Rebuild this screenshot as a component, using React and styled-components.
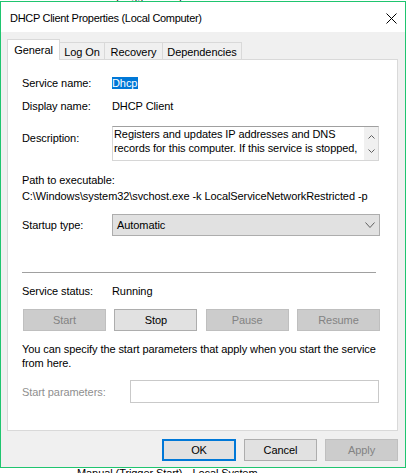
import React from "react";
import styled, { createGlobalStyle } from "styled-components";

const ui = `"Liberation Sans", Arial, sans-serif`;

const Global = createGlobalStyle`
  html, body { margin: 0; padding: 0; background: #fff; }
  body { font-family: ${ui}; font-size: 11px; color: #000; letter-spacing: -0.08px; }
  * { box-sizing: border-box; }
`;

const Desktop = styled.div`
  position: relative;
  width: 408px;
  height: 473px;
  overflow: hidden;
  background: #fff;
`;

const ServiceList = styled.div`
  display: flex;
  flex-direction: column;
`;

const ServiceRow = styled.div`
  display: flex;
  gap: 10px;
  padding-left: 77px;
  height: 14px;
  line-height: 14px;
  margin-top: ${p => p.$top}px;
  white-space: nowrap;
`;

const Window = styled.div`
  position: absolute;
  top: 1px;
  left: 0;
  width: 406px;
  height: 467px;
  border: 1px solid #1fc56f;
  background: #f0f0f0;
  display: flex;
  flex-direction: column;
`;

const TitleBar = styled.div`
  height: 30px;
  background: #fff;
  display: flex;
  align-items: center;
  justify-content: space-between;
  padding: 2px 8px 0 9px;
  font-size: 11px;
  letter-spacing: -0.3px;
`;

const Body = styled.div`
  flex: 1;
  display: flex;
  flex-direction: column;
  padding: 7px 7px 0 6px;
`;

const TabStrip = styled.div`
  display: flex;
  align-items: flex-end;
  height: 20px;
`;

const Tab = styled.div`
  width: ${p => p.$w}px;
  height: ${p => (p.$active ? 21 : 17)}px;
  background: ${p => (p.$active ? "#fff" : "#f0f0f0")};
  border: 1px solid #d9d9d9;
  border-bottom: none;
  border-left: ${p => (p.$active ? "1px solid #d9d9d9" : "none")};
  margin-bottom: ${p => (p.$active ? -1 : 0)}px;
  position: relative;
  z-index: ${p => (p.$active ? 1 : 0)};
  display: flex;
  align-items: center;
  justify-content: center;
  padding-top: ${p => (p.$active ? 0 : 1)}px;
`;

const Panel = styled.div`
  width: 391px;
  height: 372px;
  background: #fff;
  border: 1px solid #d9d9d9;
  padding: 16px 17px 0 14px;
  display: flex;
  flex-direction: column;
`;

const FieldRow = styled.div`
  display: grid;
  grid-template-columns: ${p => p.$label || 90}px 1fr;
  align-items: ${p => (p.$top ? "start" : "center")};
  margin-top: ${p => p.$gap || 0}px;
  line-height: 14px;
`;

const Label = styled.div`
  color: ${p => (p.$disabled ? "#8f8f8f" : "#000")};
  margin-top: ${p => p.$offset || 0}px;
`;

const Selected = styled.span`
  display: inline-block;
  background: #0078d7;
  color: #fff;
  line-height: 12px;
  padding-right: 1px;
`;

const DescBox = styled.div`
  width: 267px;
  height: 35px;
  display: flex;
  border: 1px solid #d6d6d6;
  border-top-color: #a0a0a0;
  background: #fff;
`;

const DescText = styled.div`
  flex: 1;
  padding: 0 2px 0 1px;
  line-height: 14px;
  height: 28px;
  overflow: hidden;
`;

const ScrollBar = styled.div`
  width: 14px;
  background: #f0f0f0;
  display: flex;
  flex-direction: column;
  align-items: center;
  justify-content: space-between;
  padding: 8px 0 7px;
`;

const Block = styled.div`
  margin-top: ${p => p.$gap || 0}px;
  line-height: 14px;
  white-space: ${p => (p.$nowrap ? "nowrap" : "normal")};
  margin-right: ${p => p.$bleed || 0}px;
`;

const Select = styled.div`
  width: 268px;
  height: 22px;
  background: #e1e1e1;
  border: 1px solid #adadad;
  display: flex;
  align-items: center;
  justify-content: space-between;
  padding: 0 4px 0 4px;
`;

const Separator = styled.div`
  width: 354px;
  height: 1px;
  background: #a0a0a0;
  margin-top: 36px;
`;

const ButtonRow = styled.div`
  display: flex;
  justify-content: space-between;
  margin: 11px 0 0 1px;
`;

const Button = styled.div`
  width: ${p => p.$w || 83}px;
  height: 22px;
  display: flex;
  align-items: center;
  justify-content: center;
  background: ${p => (p.$disabled ? "#cccccc" : "#e1e1e1")};
  border: ${p => (p.$default ? "2px solid #0078d7" : p.$disabled ? "1px solid #bfbfbf" : "1px solid #adadad")};
  color: ${p => (p.$disabled ? "#838383" : "#000")};
  font-size: 11px;
`;

const Input = styled.div`
  width: 249px;
  height: 23px;
  border: 1px solid #c9c9c9;
  background: #fff;
`;

const Footer = styled.div`
  display: flex;
  justify-content: flex-end;
  gap: 8px;
  padding-top: 8px;
`;

const Chevron = ({ up, w = 7, h = 4 }) => (
  <svg width={w} height={h} viewBox={`0 0 ${w} ${h}`}>
    <polyline
      points={up ? `0.5,${h - 0.5} ${w / 2},0.5 ${w - 0.5},${h - 0.5}` : `0.5,0.5 ${w / 2},${h - 0.5} ${w - 0.5},0.5`}
      fill="none"
      stroke="#606060"
      strokeWidth="1"
    />
  </svg>
);

const CloseIcon = () => (
  <svg width="11" height="11" viewBox="0 0 11 11">
    <path d="M0.5 0.5 L10.5 10.5 M10.5 0.5 L0.5 10.5" stroke="#000" strokeWidth="1" fill="none" />
  </svg>
);

const tabs = [
  { name: "General", w: 53, active: true },
  { name: "Log On", w: 45 },
  { name: "Recovery", w: 58 },
  { name: "Dependencies", w: 79 },
];

export default function App() {
  return (
    <Desktop>
      <Global />
      <ServiceList>
        <ServiceRow $top={-11}>
          <span>Manual (Trigger Start)</span>
          <span>Local Service</span>
        </ServiceRow>
        <ServiceRow $top={463}>
          <span>Manual (Trigger Start)</span>
          <span>Local System</span>
        </ServiceRow>
      </ServiceList>

      <Window>
        <TitleBar>
          <span>DHCP Client Properties (Local Computer)</span>
          <CloseIcon />
        </TitleBar>
        <Body>
          <TabStrip>
            {tabs.map(t => (
              <Tab key={t.name} $w={t.w} $active={t.active}>
                {t.name}
              </Tab>
            ))}
          </TabStrip>
          <Panel>
            <FieldRow>
              <Label>Service name:</Label>
              <div>
                <Selected>Dhcp</Selected>
              </div>
            </FieldRow>
            <FieldRow $gap={9}>
              <Label>Display name:</Label>
              <div>DHCP Client</div>
            </FieldRow>
            <FieldRow $gap={13} $top>
              <Label $offset={5}>Description:</Label>
              <DescBox>
                <DescText>
                  Registers and updates IP addresses and DNS records for this computer. If this
                  service is stopped, this computer will not receive dynamic IP addresses and DNS
                  updates.
                </DescText>
                <ScrollBar>
                  <Chevron up />
                  <Chevron />
                </ScrollBar>
              </DescBox>
            </FieldRow>
            <Block $gap={12}>Path to executable:</Block>
            <Block $gap={2} $nowrap>
              C:\Windows\system32\svchost.exe -k LocalServiceNetworkRestricted -p
            </Block>
            <FieldRow $gap={11}>
              <Label>Startup type:</Label>
              <Select>
                <span>Automatic</span>
                <Chevron w={10} h={6} />
              </Select>
            </FieldRow>
            <Separator />
            <FieldRow $gap={11}>
              <Label>Service status:</Label>
              <div>Running</div>
            </FieldRow>
            <ButtonRow>
              <Button $disabled>Start</Button>
              <Button>Stop</Button>
              <Button $disabled>Pause</Button>
              <Button $disabled>Resume</Button>
            </ButtonRow>
            <Block $gap={11} $bleed={-14}>
              You can specify the start parameters that apply when you start the service
              <br />
              from here.
            </Block>
            <FieldRow $gap={10} $label={108}>
              <Label $disabled>Start parameters:</Label>
              <Input />
            </FieldRow>
          </Panel>
          <Footer>
            <Button $w={74} $default>OK</Button>
            <Button $w={73}>Cancel</Button>
            <Button $w={73} $disabled>Apply</Button>
          </Footer>
        </Body>
      </Window>
    </Desktop>
  );
}
